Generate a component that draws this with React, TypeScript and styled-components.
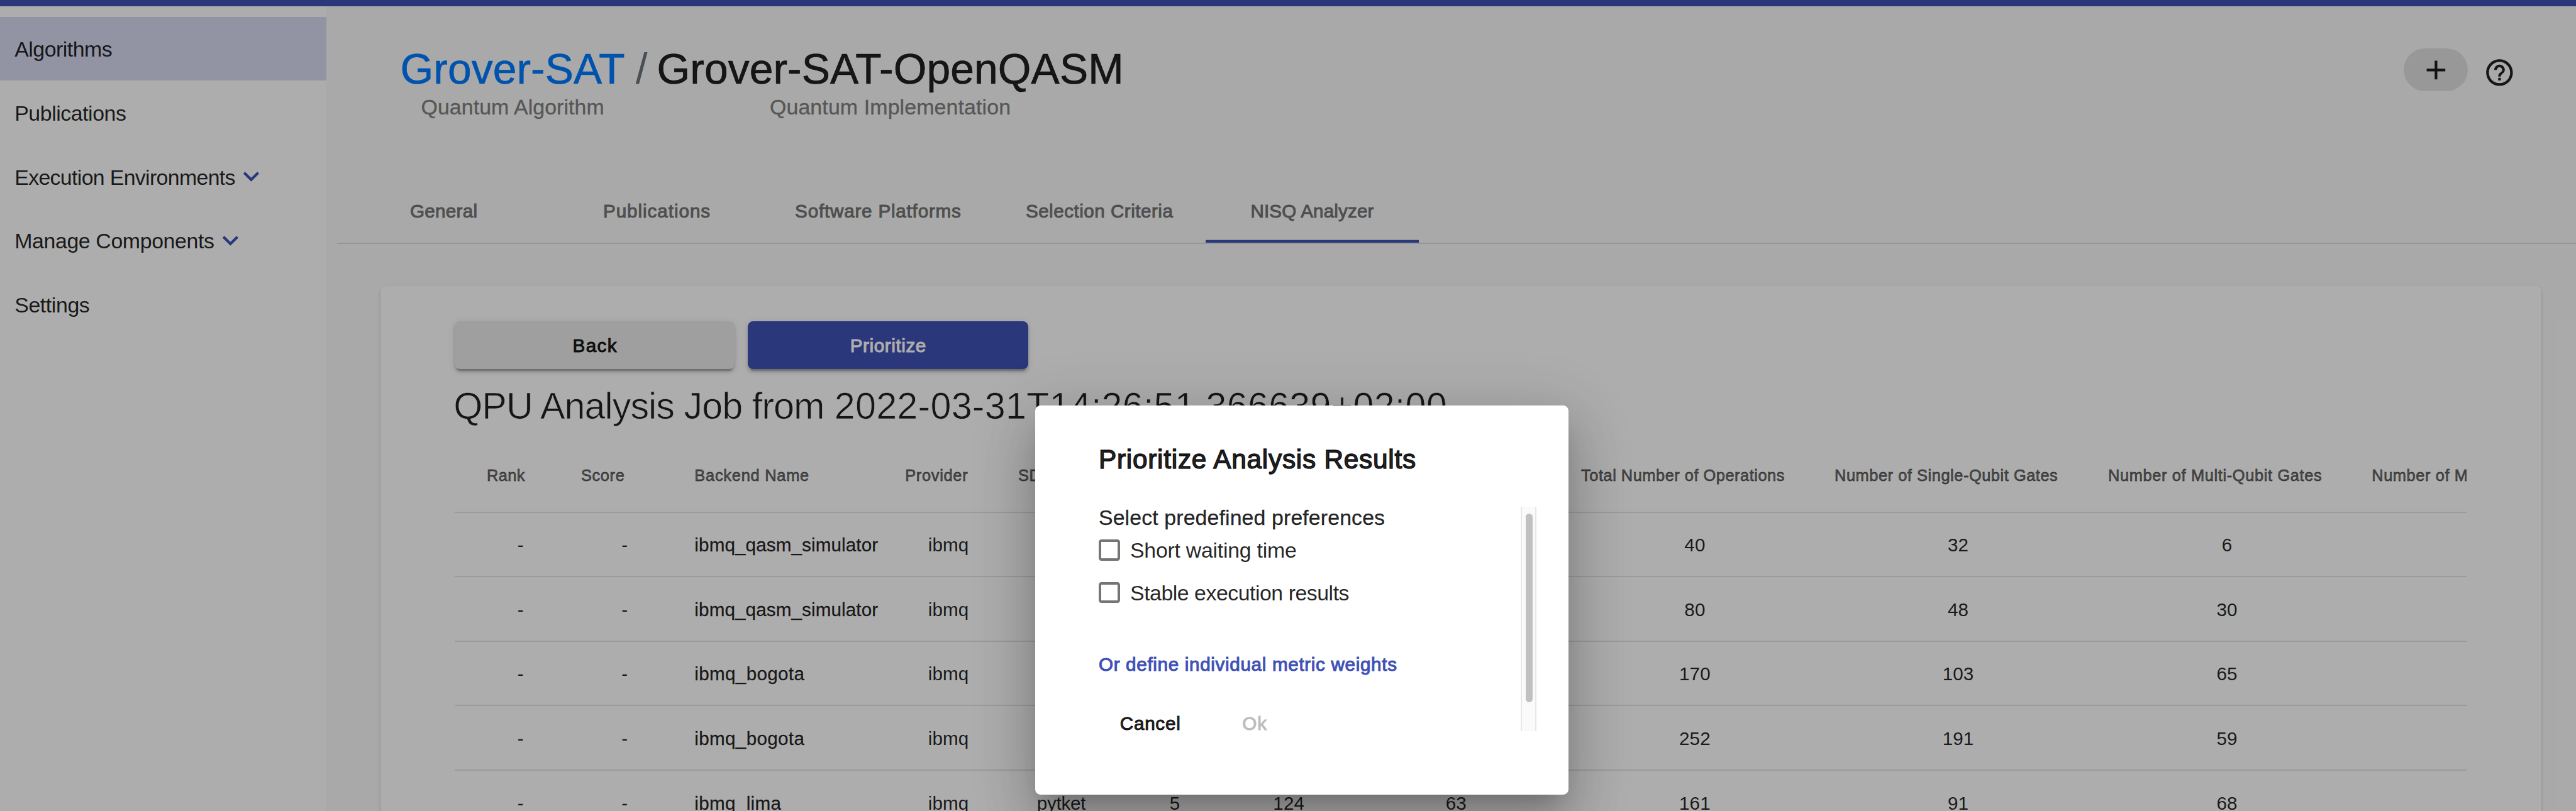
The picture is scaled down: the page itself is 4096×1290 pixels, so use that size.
import React from "react";
import styled, { createGlobalStyle, css } from "styled-components";

/* Layout values are in design pixels (5041 wide) and scaled to the 4096 viewport. */
const SCALE = 4096 / 5041;
const px = (n: number) => `${(n * SCALE).toFixed(2)}px`;
/* Material's CSS pixel at this zoom level. */
const dp = (n: number) => px(n * 2.6042);

type Weight = "thin" | "light" | "regular" | "medium";

const weightStyle = (weight: Weight) => {
  switch (weight) {
    case "medium":
      return css`
        -webkit-text-stroke: 0.036em currentColor;
      `;
    case "regular":
      return css`
        -webkit-text-stroke: 0.01em currentColor;
      `;
    case "thin":
      return css`
        -webkit-text-stroke: 0.012em #fff;
      `;
    default:
      return "";
  }
};

const GlobalStyle = createGlobalStyle`
  *, *::before, *::after { box-sizing: border-box; }
  body {
    margin: 0;
    overflow: hidden;
    font-family: "Liberation Sans", Arial, sans-serif;
    font-kerning: normal;
    color: rgba(0, 0, 0, 0.87);
    background: #fafafa;
  }
`;

const Text = styled.span<{ $weight?: Weight; $track?: number }>`
  white-space: pre;
  letter-spacing: ${(p) => p.$track ?? 0}px;
  margin-right: ${(p) => -(p.$track ?? 0)}px;
  ${(p) => weightStyle(p.$weight ?? "regular")}
`;

const Page = styled.div`
  position: relative;
  display: flex;
  flex-direction: column;
  width: 4096px;
  height: 1290px;
  overflow: hidden;
`;

const Toolbar = styled.div`
  flex: none;
  height: ${px(12.3)};
  background: #3f51b5;
`;

const Body = styled.div`
  flex: 1;
  display: flex;
  min-height: 0;
`;

const Sidebar = styled.nav`
  flex: none;
  width: ${px(639)};
  padding-top: ${px(20.7)};
  background: #fff;
`;

const NavItem = styled.div<{ $active?: boolean }>`
  display: flex;
  align-items: center;
  height: ${dp(48)};
  padding-left: ${px(28.6)};
  font-size: ${dp(16)};
  background: ${(p) => (p.$active ? "#d7dbf0" : "transparent")};

  ${Text} {
    padding-top: ${px(3.4)};
  }
`;

const Icon = styled.svg`
  flex: none;
  width: ${dp(24)};
  height: ${dp(24)};
  fill: currentColor;
`;

const Chevron = styled(Icon)`
  color: #3f51b5;
`;

const Main = styled.main`
  flex: 1;
  display: flex;
  flex-direction: column;
  min-width: 0;
  padding-left: ${px(21)};
`;

const Header = styled.header`
  flex: none;
  display: flex;
  justify-content: space-between;
  height: ${px(337.7)};
  padding: ${px(72.5)} ${px(118)} 0 ${px(123.5)};
`;

const Breadcrumb = styled.div`
  display: flex;
`;

const Crumb = styled.div`
  display: flex;
  flex-direction: column;
  align-items: center;
`;

const Title = styled.div<{ $color?: string }>`
  font-size: ${dp(32)};
  line-height: ${px(100)};
  color: ${(p) => p.$color ?? "inherit"};
`;

const Separator = styled(Title)`
  padding: 0 ${px(18.5)} 0 ${px(21)};
  color: #6c757d;
`;

const Subtitle = styled.div`
  font-size: ${dp(16)};
  line-height: ${px(50)};
  color: #808080;
`;

const Actions = styled.div`
  display: flex;
  align-items: flex-start;
  gap: ${px(31.5)};
  padding-top: ${px(10.2)};
`;

const AddButton = styled.div`
  display: flex;
  align-items: center;
  justify-content: center;
  width: ${dp(48)};
  height: ${dp(32)};
  border-radius: ${dp(16)};
  background: #e0e0e0;
`;

const HelpButton = styled.div`
  display: flex;
  padding-top: ${px(15.2)};
`;

const Tabs = styled.div`
  flex: none;
  display: flex;
  height: ${px(127)};
  border-bottom: 2px solid rgba(0, 0, 0, 0.11);
`;

const Tab = styled.div<{ $active?: boolean }>`
  display: flex;
  align-items: center;
  justify-content: center;
  min-width: ${dp(160)};
  padding: ${px(3)} ${dp(24)} 0;
  font-size: ${dp(14)};
  box-shadow: ${(p) => (p.$active ? `inset 0 -${dp(2)} 0 #3f51b5` : "none")};

  ${Text} {
    opacity: 0.6;
  }
`;

const Card = styled.section`
  flex: 1;
  margin: ${px(83.4)} ${px(68)} 0 ${px(84.3)};
  padding: ${px(68.6)} ${px(146.2)} 0 ${px(145.3)};
  border-radius: ${dp(4)} ${dp(4)} 0 0;
  background: #fff;
  box-shadow:
    0 ${dp(2)} ${dp(1)} -${dp(1)} rgba(0, 0, 0, 0.2),
    0 ${dp(1)} ${dp(1)} rgba(0, 0, 0, 0.14),
    0 ${dp(1)} ${dp(3)} rgba(0, 0, 0, 0.12);
`;

const ButtonRow = styled.div`
  display: flex;
  gap: ${px(26)};
`;

const RaisedButton = styled.div<{ $primary?: boolean }>`
  display: flex;
  align-items: center;
  justify-content: center;
  width: ${px(548.2)};
  height: ${dp(36)};
  padding-top: ${px(3)};
  border-radius: ${dp(4)};
  font-size: ${dp(14)};
  color: ${(p) => (p.$primary ? "#fff" : "inherit")};
  background: ${(p) => (p.$primary ? "#3f51b5" : "#ebebeb")};
  box-shadow:
    0 ${dp(3)} ${dp(1)} -${dp(2)} rgba(0, 0, 0, 0.2),
    0 ${dp(2)} ${dp(2)} rgba(0, 0, 0, 0.14),
    0 ${dp(1)} ${dp(5)} rgba(0, 0, 0, 0.12);
`;

const JobTitle = styled.div`
  margin-top: ${px(30.4)};
  margin-left: ${px(-2)};
  font-size: ${dp(28)};
  line-height: ${px(83)};
`;

const Table = styled.div`
  margin-top: ${px(22)};
  overflow: hidden;
`;

const columns = [258.2, 149.4, 465.8, 186, 256, 188, 258, 397, 537.4, 493.2, 558.8, 700];

const Row = styled.div`
  display: grid;
  grid-template-columns: ${columns.map(px).join(" ")};
  width: max-content;
  height: ${px(126.25)};
  border-bottom: 2px solid rgba(0, 0, 0, 0.11);
  font-size: ${dp(14)};
`;

const HeadRow = styled(Row)`
  height: ${px(145.8)};
  font-size: ${dp(12)};
  color: rgba(0, 0, 0, 0.54);
`;

const Cell = styled.div<{ $start?: number }>`
  display: flex;
  align-items: center;
  justify-content: ${(p) => (p.$start === undefined ? "center" : "flex-start")};
  padding-top: ${px(3)};
  padding-left: ${(p) => px(p.$start ?? 0)};
`;

const HeadCell = styled(Cell)<{ $sort?: number }>`
  padding-right: ${(p) => px(p.$sort ?? 47)};
`;

const Backdrop = styled.div`
  position: absolute;
  inset: 0;
  background: rgba(0, 0, 0, 0.32);
`;

const Dialog = styled.div`
  position: absolute;
  left: ${px(2025.3)};
  top: ${px(794)};
  width: ${px(1043.7)};
  height: ${px(762)};
  padding: ${px(64)} ${px(62.8)} 0 ${px(124.7)};
  border-radius: ${dp(4)};
  background: #fff;
  box-shadow:
    0 ${dp(11)} ${dp(15)} -${dp(7)} rgba(0, 0, 0, 0.2),
    0 ${dp(24)} ${dp(38)} ${dp(3)} rgba(0, 0, 0, 0.14),
    0 ${dp(9)} ${dp(46)} ${dp(8)} rgba(0, 0, 0, 0.12);
`;

const DialogTitle = styled.div`
  font-size: ${dp(20)};
  line-height: ${px(83.3)};
`;

const DialogContent = styled.div`
  display: flex;
  justify-content: space-between;
  height: ${px(439.6)};
  margin-top: ${px(50.5)};
  overflow: hidden;
`;

const Form = styled.div`
  display: flex;
  flex-direction: column;

  > * {
    flex: none;
  }
`;

const SectionLabel = styled.div`
  font-size: ${dp(16)};
  line-height: ${px(43.6)};
`;

const CheckRow = styled.div`
  display: flex;
  align-items: center;
  gap: ${px(20)};
  height: ${px(83)};
  font-size: ${dp(16)};

  ${Text} {
    padding-top: ${px(2)};
  }
`;

const Checkbox = styled.span`
  width: ${dp(16)};
  height: ${dp(16)};
  border: ${dp(2)} solid #757575;
  border-radius: ${dp(2)};
`;

const WeightsLink = styled.div`
  margin-top: ${px(53)};
  font-size: ${dp(14)};
  line-height: ${px(93.7)};
  color: #3f51b5;
`;

const DialogActions = styled.div`
  display: flex;
  gap: ${px(38)};
  margin-top: ${px(21.3)};
  font-size: ${dp(14)};
  line-height: ${px(93.7)};
`;

const FlatButton = styled.div<{ $disabled?: boolean }>`
  padding: 0 ${dp(16)};
  color: ${(p) => (p.$disabled ? "#bdbdbd" : "inherit")};
`;

const ScrollTrack = styled.div`
  width: ${px(30)};
  height: 100%;
  padding: ${px(13.5)} ${px(4.5)} 0 ${px(6.5)};
  border: solid #e8e8e8;
  border-width: 0 2px;
  background: #fafafa;
`;

const ScrollThumb = styled.div`
  height: ${px(369)};
  border-radius: ${px(8)};
  background: #c1c1c1;
`;

const nav = [
  { label: "Algorithms", track: -0.5, active: true },
  { label: "Publications", track: -0.45 },
  { label: "Execution Environments", track: -0.66, expandable: true },
  { label: "Manage Components", track: -0.38, expandable: true },
  { label: "Settings", track: -0.4 },
];

const tabs = [
  { label: "General", track: 0.3 },
  { label: "Publications", track: 0.96 },
  { label: "Software Platforms", track: 0.8 },
  { label: "Selection Criteria", track: 0.5 },
  { label: "NISQ Analyzer", track: 0.15, active: true },
];

const headings: { label: string; track?: number; start?: number; sort?: number }[] = [
  { label: "Rank", track: 0.4, sort: 58 },
  { label: "Score", track: 0.65, sort: 86 },
  { label: "Backend Name", track: 0.76, start: 62 },
  { label: "Provider", track: 0.7 },
  { label: "SDK", track: 0.7, start: 43.5 },
  { label: "" },
  { label: "" },
  { label: "" },
  { label: "Total Number of Operations", track: 0.52 },
  { label: "Number of Single-Qubit Gates", track: 0.55 },
  { label: "Number of Multi-Qubit Gates", track: 0.65 },
  { label: "Number of Measurement Operations", track: 0.6, start: 4 },
];

const rows = [
  ["-", "-", "ibmq_qasm_simulator", "ibmq", "", "", "", "", "40", "32", "6", ""],
  ["-", "-", "ibmq_qasm_simulator", "ibmq", "", "", "", "", "80", "48", "30", ""],
  ["-", "-", "ibmq_bogota", "ibmq", "", "", "", "", "170", "103", "65", ""],
  ["-", "-", "ibmq_bogota", "ibmq", "", "", "", "", "252", "191", "59", ""],
  ["-", "-", "ibmq_lima", "ibmq", "pytket", "5", "124", "63", "161", "91", "68", ""],
];

const NAME_COLUMN = 2;

export default function App() {
  return (
    <>
      <GlobalStyle />
      <Page>
        <Toolbar />
        <Body>
          <Sidebar>
            {nav.map((item) => (
              <NavItem key={item.label} $active={item.active}>
                <Text $weight="light" $track={item.track}>
                  {item.label}
                </Text>
                {item.expandable && (
                  <Chevron viewBox="0 0 24 24">
                    <path d="M16.59 8.59 12 13.17 7.41 8.59 6 10l6 6 6-6z" />
                  </Chevron>
                )}
              </NavItem>
            ))}
          </Sidebar>
          <Main>
            <Header>
              <Breadcrumb>
                <Crumb>
                  <Title $color="#007bff">
                    <Text $track={0.1}>Grover-SAT</Text>
                  </Title>
                  <Subtitle>
                    <Text $track={0.09}>Quantum Algorithm</Text>
                  </Subtitle>
                </Crumb>
                <Separator>
                  <Text $weight="light">/</Text>
                </Separator>
                <Crumb>
                  <Title>
                    <Text $track={0.12}>Grover-SAT-OpenQASM</Text>
                  </Title>
                  <Subtitle>
                    <Text $track={0.14}>Quantum Implementation</Text>
                  </Subtitle>
                </Crumb>
              </Breadcrumb>
              <Actions>
                <AddButton>
                  <Icon viewBox="0 0 24 24">
                    <path d="M19 13h-6v6h-2v-6H5v-2h6V5h2v6h6v2z" />
                  </Icon>
                </AddButton>
                <HelpButton>
                  <Icon viewBox="0 0 24 24">
                    <path d="M11 18h2v-2h-2v2zm1-16C6.48 2 2 6.48 2 12s4.48 10 10 10 10-4.48 10-10S17.52 2 12 2zm0 18c-4.41 0-8-3.59-8-8s3.59-8 8-8 8 3.59 8 8-3.59 8-8 8zm0-14c-2.21 0-4 1.79-4 4h2c0-1.1.9-2 2-2s2 .9 2 2c0 2-3 1.75-3 5h2c0-2.25 3-2.5 3-5 0-2.21-1.79-4-4-4z" />
                  </Icon>
                </HelpButton>
              </Actions>
            </Header>
            <Tabs>
              {tabs.map((tab) => (
                <Tab key={tab.label} $active={tab.active}>
                  <Text $weight="medium" $track={tab.track}>
                    {tab.label}
                  </Text>
                </Tab>
              ))}
            </Tabs>
            <Card>
              <ButtonRow>
                <RaisedButton>
                  <Text $weight="medium" $track={1.4}>Back</Text>
                </RaisedButton>
                <RaisedButton $primary>
                  <Text $weight="medium" $track={0.6}>Prioritize</Text>
                </RaisedButton>
              </ButtonRow>
              <JobTitle>
                <Text $weight="thin" $track={-0.95}>{"QPU Analysis Job from "}</Text>
                <Text $weight="thin" $track={0.22}>2022-03-31T14:26:51.366639+02:00</Text>
              </JobTitle>
              <Table>
                <HeadRow>
                  {headings.map((h, i) => (
                    <HeadCell key={i} $start={h.start} $sort={h.sort}>
                      <Text $weight="medium" $track={h.track}>{h.label}</Text>
                    </HeadCell>
                  ))}
                </HeadRow>
                {rows.map((row, r) => (
                  <Row key={r}>
                    {row.map((value, i) =>
                      i === NAME_COLUMN ? (
                        <Cell key={i} $start={62}>
                          <Text $track={value.includes("qasm") ? 0.12 : 0.33}>{value}</Text>
                        </Cell>
                      ) : (
                        <Cell key={i}>
                          <Text $weight="light" $track={value === "pytket" ? -0.23 : 0.1}>{value}</Text>
                        </Cell>
                      ),
                    )}
                  </Row>
                ))}
              </Table>
            </Card>
          </Main>
        </Body>
        <Backdrop />
        <Dialog>
          <DialogTitle>
            <Text $weight="medium" $track={0.76}>Prioritize Analysis Results</Text>
          </DialogTitle>
          <DialogContent>
            <Form>
              <SectionLabel>
                <Text $track={0.12}>Select predefined preferences</Text>
              </SectionLabel>
              <CheckRow>
                <Checkbox />
                <Text $weight="light" $track={-0.26}>Short waiting time</Text>
              </CheckRow>
              <CheckRow>
                <Checkbox />
                <Text $weight="light" $track={-0.48}>Stable execution results</Text>
              </CheckRow>
              <WeightsLink>
                <Text $weight="medium" $track={0.68}>Or define individual metric weights</Text>
              </WeightsLink>
              <DialogActions>
                <FlatButton>
                  <Text $weight="medium" $track={0.75}>Cancel</Text>
                </FlatButton>
                <FlatButton $disabled>
                  <Text $weight="medium" $track={1}>Ok</Text>
                </FlatButton>
              </DialogActions>
            </Form>
            <ScrollTrack>
              <ScrollThumb />
            </ScrollTrack>
          </DialogContent>
        </Dialog>
      </Page>
    </>
  );
}
